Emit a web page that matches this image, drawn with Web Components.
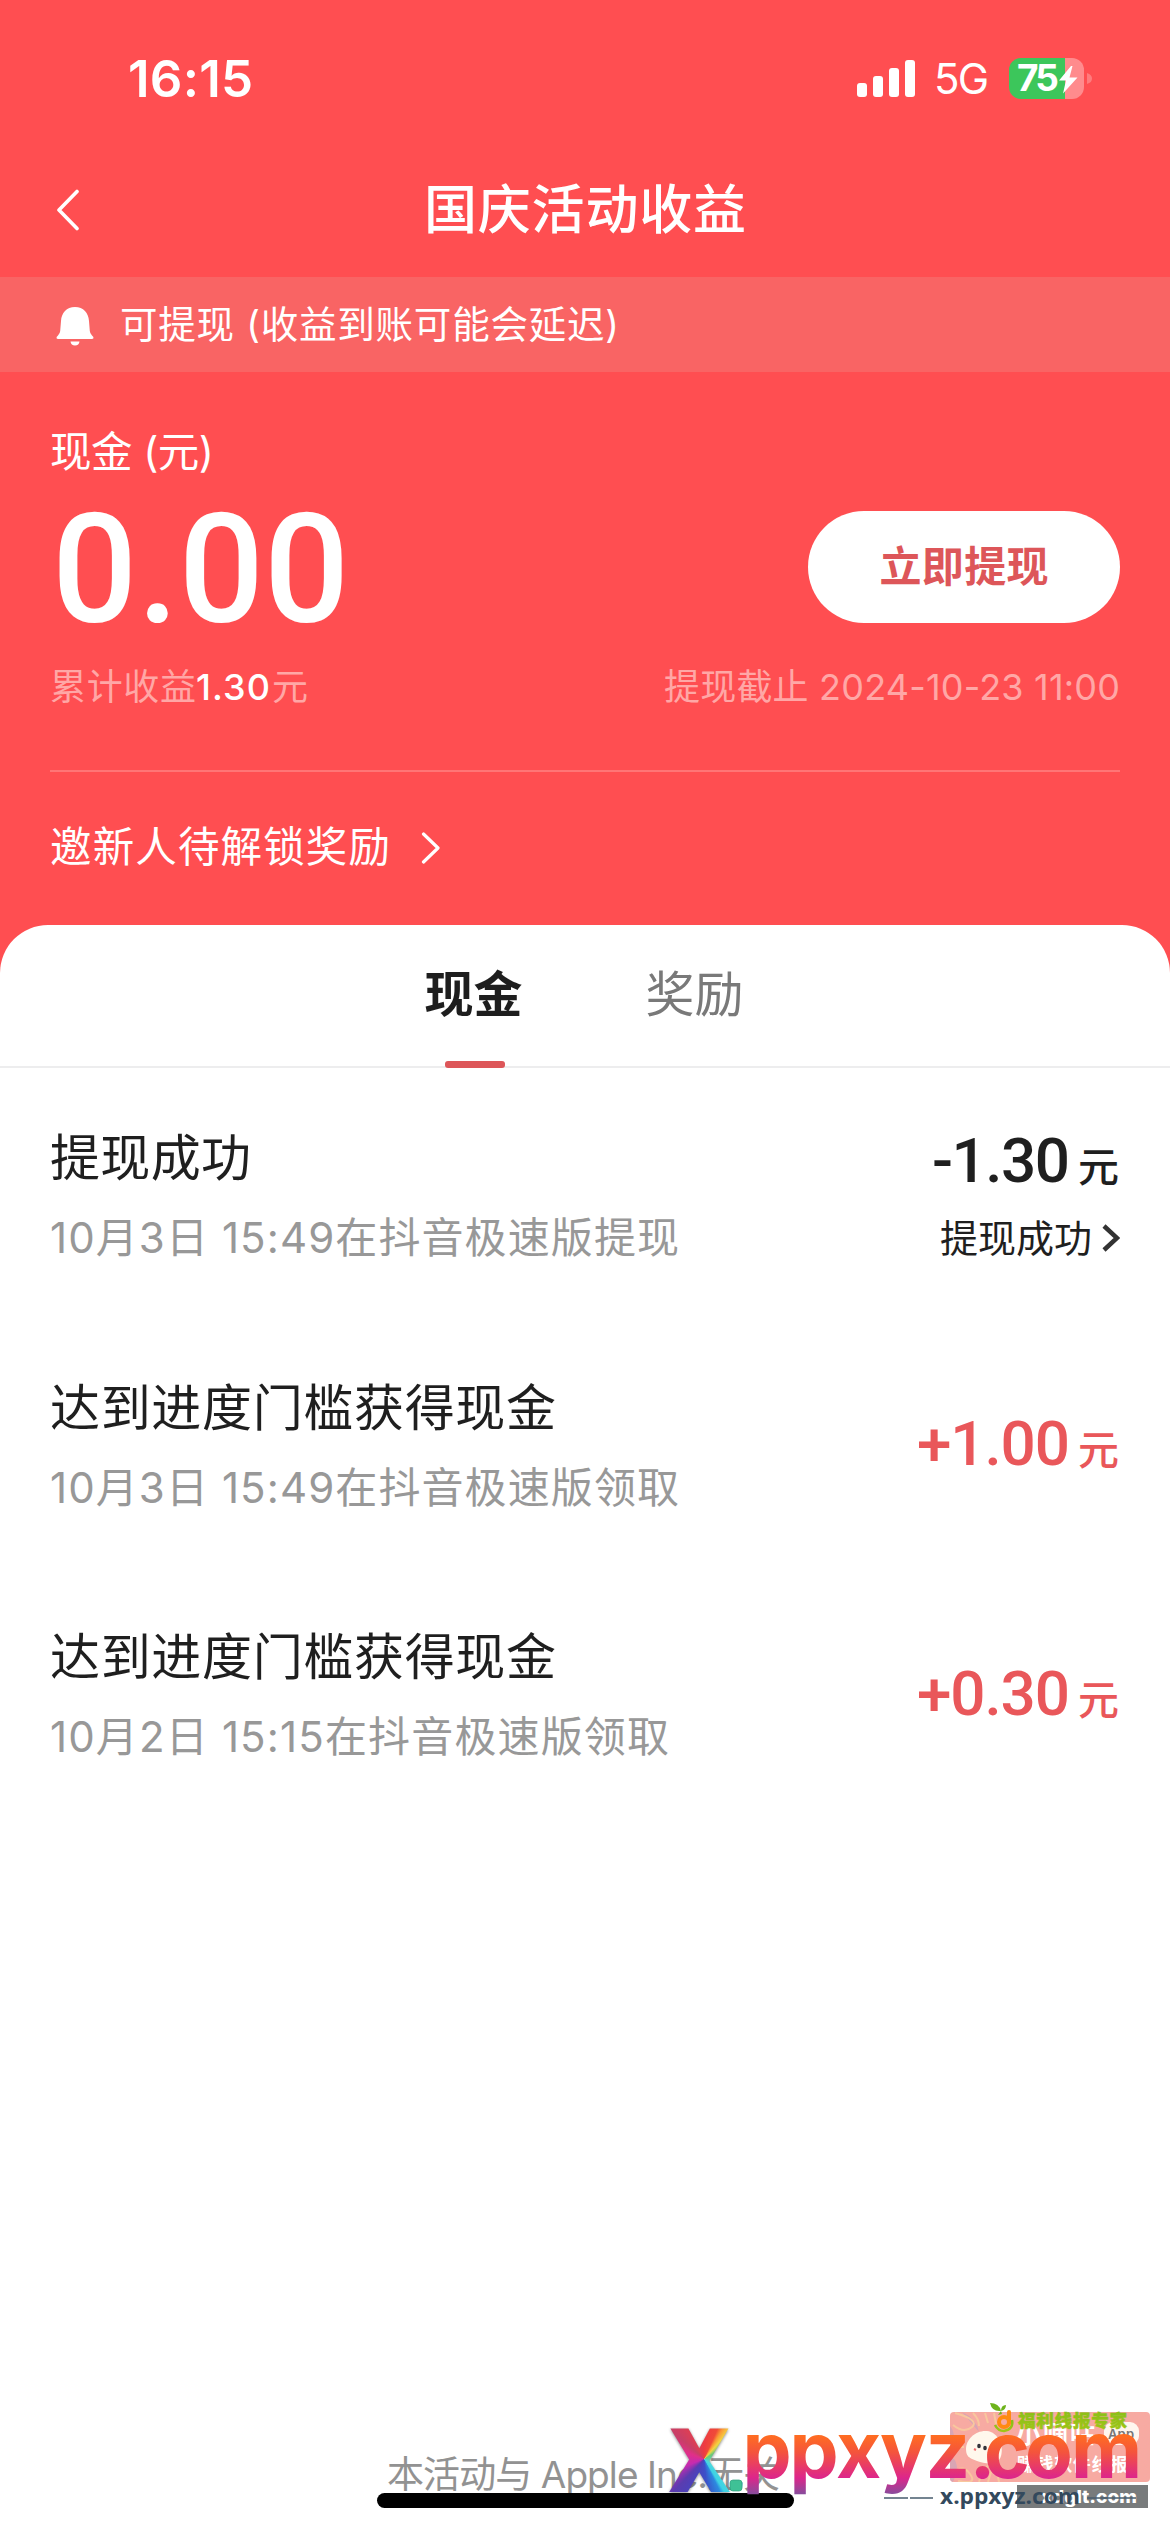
<!DOCTYPE html>
<html lang="zh-CN">
<head>
<meta charset="utf-8">
<title>国庆活动收益</title>
<style>
html,body{margin:0;padding:0}
body{width:1170px;height:2532px;overflow:hidden;background:#fff;font-family:Inter,"Noto Sans CJK SC",sans-serif;line-height:1.2}
</style>
</head>
<body>
<income-page></income-page>
<script>
const define = (name, html, setup) => customElements.define(name, class extends HTMLElement {
  connectedCallback() {
    if (this.shadowRoot) return;
    const root = this.attachShadow({ mode: 'open' });
    const t = document.createElement('template');
    t.innerHTML = html;
    root.appendChild(t.content.cloneNode(true));
    if (setup) setup(this, root);
  }
});

/* One line of text whose tracking is set so that it spans the given width. */
define('fit-text', `<style>
:host{display:inline-block;white-space:nowrap}
span{display:inline-block}
</style><span><slot></slot></span>`, (host, root) => {
  const span = root.querySelector('span');
  const n = root.querySelector('slot').assignedNodes({ flatten: true }).map(x => x.textContent).join('').length;
  const w = parseFloat(host.getAttribute('w'));
  if (n < 2) return;
  const gap = (w - span.getBoundingClientRect().width) / (n - 1);
  span.style.letterSpacing = gap + 'px';
  span.style.marginRight = -gap + 'px';
});

define('status-bar', `<style>
:host{display:flex;height:157px;align-items:center;color:#fff;padding:0 78px 0 128px}
.time{font-size:51px;font-weight:600;flex:1}
.sig{margin-right:19px}
.net{font-size:42px;font-weight:400;margin-right:20px;padding-top:1px}
.bat{position:relative;width:83px;height:41px;margin-top:-1px}
.cell{width:75px;height:41px;border-radius:12px;background:linear-gradient(90deg,#3cc65b 56px,#ff8b8d 56px);display:flex;align-items:center;padding-left:8px;box-sizing:border-box;font-weight:700;font-size:37px}
.bat svg{position:absolute;left:0;top:0}
</style>
<div class="time"><fit-text w="125">16:15</fit-text></div>
<svg class="sig" width="58" height="37" fill="#fff"><rect y="23" width="10" height="14" rx="3"/><rect x="16" y="16" width="10" height="21" rx="3"/><rect x="32" y="8" width="10" height="29" rx="3"/><rect x="48" width="10" height="37" rx="3"/></svg>
<div class="net"><fit-text w="55">5G</fit-text></div>
<div class="bat"><div class="cell"><fit-text w="42">75</fit-text></div>
<svg width="83" height="41"><path d="M62 8 50 22.500H57L54 35.500 68.500 19.500H60.500L63.500 8Z" fill="#fff"/><path d="M78 15q5 1.500 5 5.500t-5 5.500z" fill="#ff7b7d"/></svg></div>`);

define('nav-bar', `<style>
:host{display:grid;grid-template-columns:1fr auto 1fr;align-items:center;height:106px;margin-bottom:14px;color:#fff;padding:0 56px}
h1{margin:0;font-size:53px;font-weight:500;line-height:60px}
</style>
<svg width="24" height="42" fill="none" stroke="#fff" stroke-width="3.600" stroke-linecap="round" stroke-linejoin="round"><path d="M21 2.500 3 21 21 39.500"/></svg>
<h1><fit-text w="322"><slot></slot></fit-text></h1><span></span>`);

define('notice-bar', `<style>
:host{display:flex;height:95px;align-items:center;background:#f96464;color:#fff;padding-left:56px;gap:26px;font-size:37.500px}
svg{margin-top:3px}
</style>
<svg width="38" height="39" fill="#fff"><path d="M19 0C10.500 0 5.500 6 5 14L4.200 24Q4 26.500 2 28.500L.6 30Q0 32 2 32H36Q38 32 37.400 30L36 28.500Q34 26.500 33.800 24L33 14C32.500 6 27.500 0 19 0ZM14.500 34.500h9Q23 38.500 19 38.500T14.500 34.500Z"/></svg>
<fit-text w="499">可提现 (收益到账可能会延迟)</fit-text>`);

define('pill-button', `<style>
:host{display:flex;width:312px;height:112px;border-radius:56px;background:#fff;color:#dd5659;align-items:center;justify-content:center;font-size:42px;font-weight:600;margin-top:-2px}
</style><fit-text w="169"><slot></slot></fit-text>`);

define('wallet-card', `<style>
:host{display:block;height:553px;padding:51px 50px 0;box-sizing:border-box;color:#fff}
div{display:flex;align-items:center;justify-content:space-between}
.label{height:60px;font-size:41.500px}
.main{height:170px}
.main b{font:500 153px/170px Roboto,sans-serif;padding-left:2px;padding-top:4px;transform:scaleX(.98);transform-origin:0 0}
.sub{height:70px;font-size:36px;color:#ffa7a6}
.sub strong{font-weight:500;color:#fff;margin-right:2px}
.more{border-top:2px solid #ff7576;margin-top:47px;height:152px;font-size:41.500px;justify-content:flex-start;gap:31px}
</style>
<div class="label"><fit-text w="164">现金 (元)</fit-text></div>
<div class="main"><b>0.00</b><pill-button>立即提现</pill-button></div>
<div class="sub"><span><fit-text w="146">累计收益</fit-text><strong><fit-text w="74">1.30</fit-text></strong><fit-text w="36">元</fit-text></span>
<fit-text w="456">提现截止 2024-10-23 11:00</fit-text></div>
<div class="more"><fit-text w="340">邀新人待解锁奖励</fit-text><svg width="20" height="32" fill="none" stroke="#fff" stroke-width="3.200" stroke-linecap="round" stroke-linejoin="round"><path d="M2.500 2 17 16 2.500 30"/></svg></div>`);

define('tab-strip', `<style>
:host{display:flex;height:141px;border-bottom:2px solid #ededee;justify-content:center;gap:123px;padding-right:2px;font-size:49px;color:#797979}
div{position:relative;display:flex;align-items:center}
.on{color:#1e1e1e;font-weight:600}
.on::after{content:"";position:absolute;left:20px;bottom:-2px;width:60px;height:7px;border-radius:3px;background:#dd5659}
</style><div class="on"><fit-text w="98">现金</fit-text></div><div><fit-text w="98">奖励</fit-text></div>`);

define('record-row', `<style>
:host{display:flex;justify-content:space-between;align-items:center;height:160px;padding:50px 50px 39.500px;line-height:80px;color:#1f1f1f}
:host([gain]) .amt{color:#e9575a;margin-top:-13px}
.left,.right{display:flex;flex-direction:column}
.right{align-items:flex-end}
.t{font-size:50px}
.d{font-size:42px;color:#989898}
.t,.d,.s{height:80px}
.amt{display:flex;align-items:baseline;height:77px;padding-top:3px;padding-right:1px}
.amt b{font:500 62px/80px Roboto,sans-serif;margin-right:8px}
.amt span{font-size:41px;font-weight:500}
.s{display:flex;align-items:center;gap:10px;font-size:38px}
</style>
<div class="left"><div class="t"></div><div class="d"></div></div>
<div class="right"><div class="amt"><b></b><span>元</span></div></div>`, (host, root) => {
  const a = k => host.getAttribute(k);
  root.querySelector('.t').innerHTML = `<fit-text w="${a('tw')}">${a('name')}</fit-text>`;
  root.querySelector('.d').innerHTML = `<fit-text w="${a('dw')}">${a('detail')}</fit-text>`;
  root.querySelector('b').innerHTML = `<fit-text w="${a('aw')}">${a('amount')}</fit-text>`;
  if (a('state')) root.querySelector('.right').insertAdjacentHTML('beforeend',
    `<div class="s"><fit-text w="152">${a('state')}</fit-text><svg width="18" height="28" fill="none" stroke="#333" stroke-width="4.500"><path d="M2 2 15 14 2 26"/></svg></div>`);
});

define('record-panel', `<style>
:host{display:flex;flex-direction:column;height:1607px;background:#fff;border-radius:48px 48px 0 0}
footer{margin-top:auto;height:40px;line-height:40px;margin-bottom:37px;padding-left:387px;font-size:37px;color:#929292}
</style>
<tab-strip></tab-strip>
<record-row name="提现成功" tw="201" detail="10月3日 15:49在抖音极速版提现" dw="629" amount="-1.30" aw="138" state="提现成功"></record-row>
<record-row gain name="达到进度门槛获得现金" tw="506" detail="10月3日 15:49在抖音极速版领取" dw="629" amount="+1.00" aw="153"></record-row>
<record-row gain name="达到进度门槛获得现金" tw="506" detail="10月2日 15:15在抖音极速版领取" dw="619" amount="+0.30" aw="153"></record-row>
<footer><fit-text w="393">本活动与 Apple Inc.无关</fit-text></footer>`);

define('water-mark', `<style>
:host{position:absolute;left:660px;top:2400px;width:510px;height:132px}
svg{position:absolute;left:0;top:0}
.x{position:absolute;left:9px;top:3px;width:66px;height:110px;transform:scaleX(.95);transform-origin:0 0;font:800 89px/110px "Open Sans",sans-serif;color:transparent;background:conic-gradient(from 0deg at 37px 56px,#ee3a42 0deg,#f04a38 25deg,#fb9a35 33deg,#f3d443 43deg,#6bc979 60deg,#4cd9df 130deg,#3ed2e4 147deg,#2c8ae0 153deg,#3c50c8 175deg,#4a43bd 205deg,#5a3cb0 225deg,#c62bb0 250deg,#e12f88 290deg,#c83f67 310deg,#dc3f55 330deg,#ee3a42 360deg);-webkit-background-clip:text;background-clip:text;filter:drop-shadow(0 1px 1.500px #0007);white-space:nowrap}
</style>
<svg width="510" height="132" viewBox="660 2400 510 132">
<defs>
<linearGradient id="g" gradientUnits="userSpaceOnUse" x1="0" y1="2436" x2="0" y2="2494"><stop offset="0" stop-color="#ff6c22"/><stop offset=".28" stop-color="#f4543c"/><stop offset=".72" stop-color="#dd268b"/><stop offset="1" stop-color="#884c9c"/></linearGradient>
<linearGradient id="gr" x1="0" y1="0" x2="0" y2="1"><stop offset="0" stop-color="#86be18"/><stop offset="1" stop-color="#a0c516"/></linearGradient>
<clipPath id="c"><rect x="950" y="2412" width="200" height="70" rx="4"/></clipPath>
</defs>
<g clip-path="url(#c)"><rect x="950" y="2412" width="200" height="70" fill="#f7aaa2"/>
<path d="M950 2426Q958 2436 950 2450ZM950 2456Q962 2462 953 2482H950ZM962 2412Q976 2418 979 2432" fill="#d9a5b4"/>
<g fill="none" stroke="#f8c79e" stroke-width="2"><path d="M953 2425Q964 2434 972 2427T955 2413M973 2413Q979 2419 979 2426M985 2413 988 2423M994 2413 996 2424M954 2474Q962 2463 970 2474T958 2481M979 2482Q981 2471 990 2464M988 2482Q991 2472 993 2466M999 2482 996 2467M1004 2478 1000 2466M952 2447H964"/></g>
<path d="M966 2449C966 2439 976 2430 987 2431S1004 2446 1001 2456 986 2464 977 2461 966 2455 966 2449Z" fill="#fff8ec"/>
<ellipse cx="979" cy="2446" rx="1.800" ry="2.200" fill="#34343a"/><ellipse cx="985" cy="2448" rx="1.800" ry="2.200" fill="#34343a"/><path d="M974 2449l2 1M988 2452l3 1" stroke="#ef6e70" stroke-width="2"/>
</g>
<rect x="1104" y="2422" width="35" height="23" rx="9" fill="#fff6ee"/>
<g font-family="Inter,'Noto Sans CJK SC',sans-serif" font-weight="700">
<text x="1016" y="2443" font-size="25" fill="#fff" textLength="79">小嘀咕</text>
<text x="1108" y="2439" font-size="13" font-weight="600" fill="#777" textLength="26">App</text>
<text x="1017" y="2471" font-size="18" fill="#fff" textLength="111">赚钱软件线报</text>
</g>
<g fill="none" stroke="url(#gr)" stroke-width="2.500"><path d="M1012 2420Q1014 2429 1004 2431Q998 2431 995 2425"/></g>
<path d="M990 2403Q999 2403 1001 2411Q992 2412 990 2403ZM1001 2411Q1001 2405 1006 2405Q1006 2410 1001 2411ZM1001 2411l-3 4 4 -1z" fill="#6eb41c"/>
<path d="M1009 2412V2423" stroke="#ff8a12" stroke-width="4" stroke-linecap="round"/><circle cx="1004" cy="2422" r="5" fill="none" stroke="#ff8a12" stroke-width="4"/>
<text x="1018" y="2427" font-family="'Noto Sans CJK SC',sans-serif" font-size="17.500" font-weight="900" fill="url(#gr)" stroke="url(#gr)" stroke-width=".5" textLength="109">福利线报专家</text>
<rect x="1017" y="2485" width="131" height="23" fill="#787b7c"/>
<text x="1041" y="2503" font-family="Inter,sans-serif" font-size="18" font-weight="800" fill="#fff" textLength="96" lengthAdjust="spacingAndGlyphs">xdglt.com</text>
<path d="M884 2498h24m2 0h23M1087 2498h49" stroke="#475c6d" stroke-width="1.700"/>
<text x="940" y="2504" font-family="'Open Sans',sans-serif" font-size="22" font-weight="700" fill="#33495d" textLength="140" lengthAdjust="spacingAndGlyphs">x.ppxyz.com</text>
<text y="2478" x="742.500 789.500 836 880 925.500 969.500 984 1025 1071" font-family="Inter,sans-serif" font-size="78" font-weight="700" fill="url(#g)">ppxyz.com</text>
<rect x="730" y="2480" width="12" height="11" rx="3" fill="#3fc196" stroke="#2e9f7c" stroke-width=".7"/>
</svg>
<div class="x">X</div>`);

define('home-indicator', `<style>:host{position:absolute;left:377px;top:2493px;width:417px;height:15px;border-radius:8px;background:#000}</style>`);

define('income-page', `<style>
:host{display:block;position:relative;width:1170px;height:2532px;background:linear-gradient(#ff4e51 1100px,#fff 1100px);overflow:hidden}
</style>
<status-bar></status-bar><nav-bar>国庆活动收益</nav-bar><notice-bar></notice-bar>
<wallet-card></wallet-card><record-panel></record-panel>
<home-indicator></home-indicator><water-mark></water-mark>`);
</script>
</body>
</html>
